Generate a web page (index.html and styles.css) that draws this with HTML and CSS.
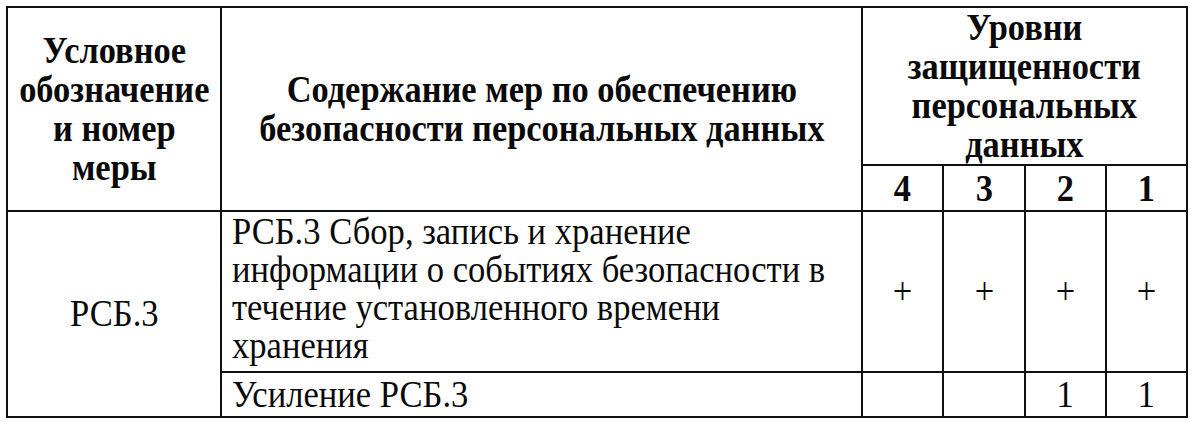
FILE: index.html
```html
<!DOCTYPE html>
<html lang="ru">
<head>
<meta charset="utf-8">
<title>Меры по обеспечению безопасности персональных данных</title>
<link rel="stylesheet" href="styles.css">
</head>
<body>
<div class="sheet">
  <div class="cell span-rows"><span class="t bold">Условное<br>обозначение<br>и номер<br>меры</span></div>
  <div class="cell span-rows"><span class="t bold">Содержание мер по обеспечению<br>безопасности персональных данных</span></div>
  <div class="cell levels-head"><span class="t bold">Уровни<br>защищенности<br>персональных<br>данных</span></div>
  <div class="cell"><span class="t bold">4</span></div>
  <div class="cell"><span class="t bold">3</span></div>
  <div class="cell"><span class="t bold">2</span></div>
  <div class="cell"><span class="t bold">1</span></div>

  <div class="cell code"><span class="t reg">РСБ.3</span></div>
  <div class="cell desc"><span class="t reg left">РСБ.3 Сбор, запись и хранение<br>информации о событиях безопасности в<br>течение установленного времени<br>хранения</span></div>
  <div class="cell"><span class="t reg">+</span></div>
  <div class="cell"><span class="t reg">+</span></div>
  <div class="cell"><span class="t reg">+</span></div>
  <div class="cell"><span class="t reg">+</span></div>

  <div class="cell desc enh"><span class="t reg left">Усиление РСБ.3</span></div>
  <div class="cell"></div>
  <div class="cell"></div>
  <div class="cell"><span class="t reg">1</span></div>
  <div class="cell"><span class="t reg">1</span></div>
</div>
</body>
</html>
```

FILE: styles.css
```css
html, body {
  margin: 0;
  padding: 0;
  background: #ffffff;
}

body {
  font-family: "Liberation Serif", serif;
  color: #0a0a0a;
}

.sheet {
  display: grid;
  grid-template-columns: 212px 639px 79px 80px 79px 79px;
  grid-template-rows: 156px 44px 159px 43px;
  gap: 2px;
  padding: 2px;
  margin: 6px 0 0 6px;
  width: max-content;
  background: #111111;
}

.cell {
  background: #ffffff;
  display: flex;
  align-items: center;
  justify-content: center;
  text-align: center;
}

.span-rows {
  grid-row: 1 / 3;
}

.levels-head {
  grid-column: 3 / 7;
  grid-row: 1;
}

.code {
  grid-column: 1;
  grid-row: 3 / 5;
}

.desc {
  justify-content: flex-start;
  align-items: flex-start;
  text-align: left;
  padding-left: 10px;
  padding-top: 1px;
}

.enh {
  align-items: center;
  padding-top: 0;
}

.t {
  display: inline-block;
  white-space: nowrap;
  font-family: "Liberation Serif", serif;
}

.t.left {
  transform-origin: left center;
}

.bold {
  font-weight: 700;
  font-size: 37px;
  line-height: 39px;
  transform: scaleX(0.93);
}

.reg {
  font-weight: 400;
  font-size: 37px;
  line-height: 38px;
  transform: scaleX(0.935);
}
```
